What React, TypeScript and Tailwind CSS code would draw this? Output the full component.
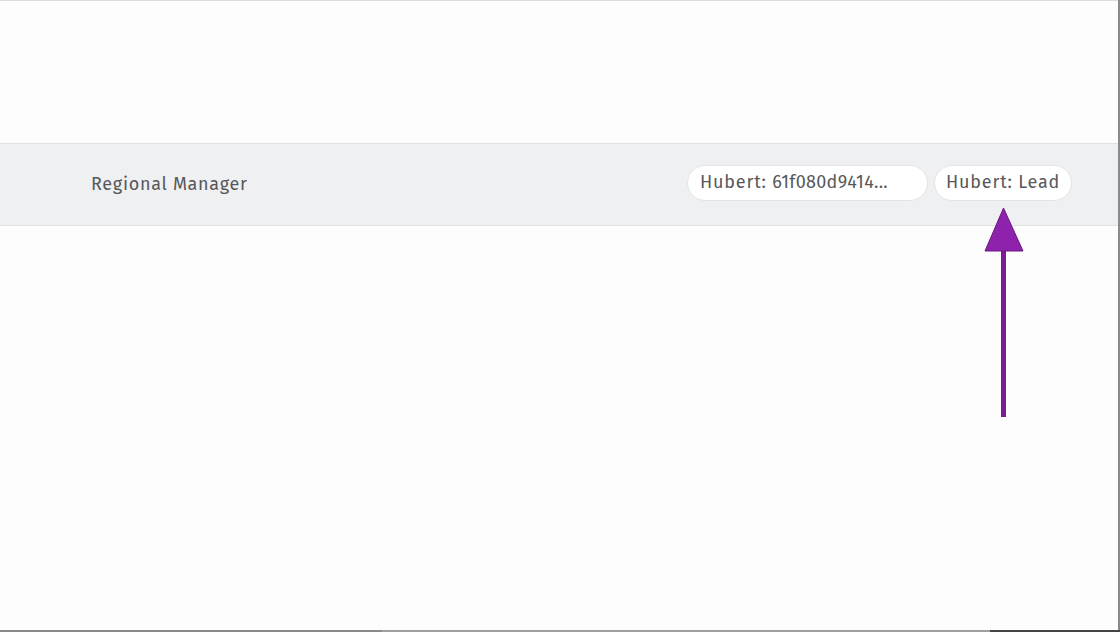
import React from "react";

export default function App() {
  return (
    <div className="relative w-[1120px] h-[632px] bg-[#fdfdfd] overflow-hidden" style={{ fontFamily: '"Fira Sans", "Open Sans", "Noto Sans", sans-serif' }}>
      <div className="h-px bg-[#dcdcdc]" />
      <div className="h-[142px]" />
      <div className="h-[83px] bg-[#eff0f2] border-t border-b border-[#e0e1e3] flex items-center pl-[91px] pr-[48px]">
        <span className="text-[18px] text-[#58585a] tracking-[0.7px]">Regional Manager</span>
        <div className="ml-auto flex items-center gap-[6px] mt-[-4px]">
          <span className="h-[36px] w-[241px] rounded-full bg-white border border-[#e4e4e6] flex items-center pl-[12px] text-[18px] text-[#58585a] tracking-[0.8px] whitespace-nowrap">
            <span>Hubert: <span className="tracking-[0.3px]">61f080d9414...</span></span>
          </span>
          <span className="h-[36px] w-[138px] rounded-full bg-white border border-[#e4e4e6] flex items-center pl-[11px] text-[18px] text-[#58585a] tracking-[0.8px] whitespace-nowrap">Hubert: Lead</span>
        </div>
      </div>
      <svg className="absolute left-[980px] top-[205px]" width="48" height="216" viewBox="0 0 48 216">
        <rect x="21" y="40" width="5" height="172" fill="#7d1b97" />
        <polygon points="23.5,3 5,46 43,46" fill="#8e22ad" stroke="#6a1680" strokeWidth="1" />
      </svg>
      <div className="absolute right-0 top-0 w-[2px] h-full bg-[#8a8a8a]" />
      <div className="absolute left-0 bottom-0 w-full h-[2px] flex">
        <div className="w-[382px] bg-[#8a8a8a]" />
        <div className="w-[608px] bg-[#a0a0a0]" />
        <div className="flex-1 bg-[#444444]" />
      </div>
    </div>
  );
}
